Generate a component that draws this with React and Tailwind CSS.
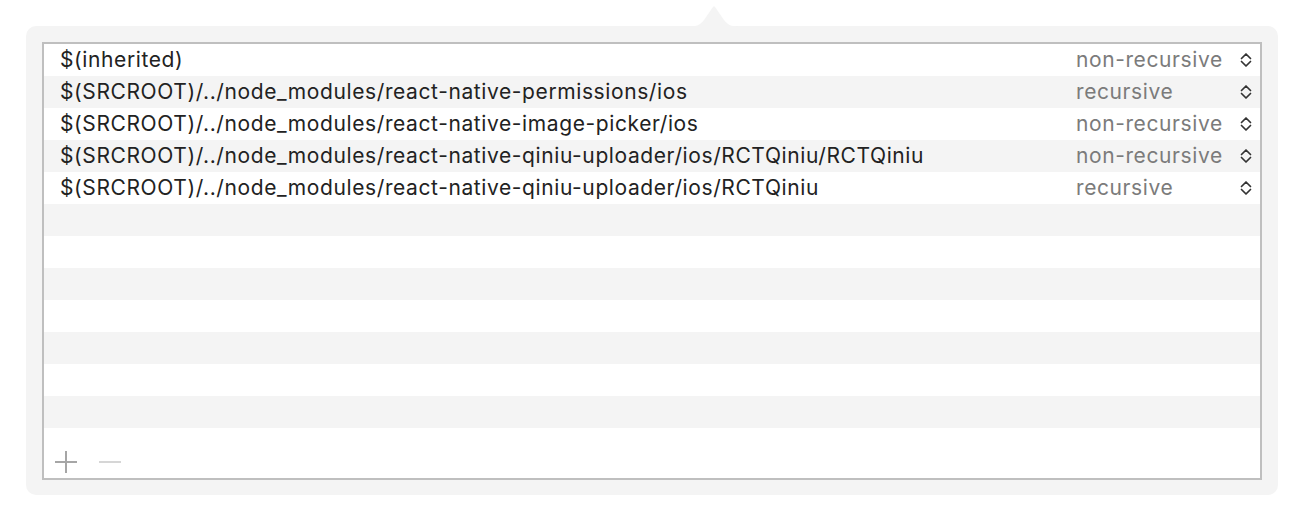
const rows = [
  { path: '$(inherited)', mode: 'non-recursive' },
  { path: '$(SRCROOT)/../node_modules/react-native-permissions/ios', mode: 'recursive' },
  { path: '$(SRCROOT)/../node_modules/react-native-image-picker/ios', mode: 'non-recursive' },
  { path: '$(SRCROOT)/../node_modules/react-native-qiniu-uploader/ios/RCTQiniu/RCTQiniu', mode: 'non-recursive' },
  { path: '$(SRCROOT)/../node_modules/react-native-qiniu-uploader/ios/RCTQiniu', mode: 'recursive' },
];

const FILLER = 7;

function UpDown() {
  return (
    <svg width="12" height="16" viewBox="0 0 12 16" fill="none" stroke="#333" strokeWidth="1.7" strokeLinecap="round" strokeLinejoin="round">
      <path d="M1.5 6.5 L6 2 L10.5 6.5" />
      <path d="M1.5 9.5 L6 14 L10.5 9.5" />
    </svg>
  );
}

export default function App() {
  const stripe = (i) => (i % 2 === 0 ? 'bg-white' : 'bg-[#f4f4f4]');

  return (
    <div className="relative h-[522px] w-[1304px] bg-white pt-[26px] pl-[26px] font-['Inter',sans-serif]">
      {/* popover arrow */}
      <svg className="absolute left-[686px] top-0" width="56" height="27" viewBox="0 0 56 27">
        <path d="M0 27 C10 27 14 25 18 20 L27 7 Q28 5.5 29 7 L38 20 C42 25 46 27 56 27 Z" fill="#f4f4f4" />
      </svg>

      <div className="h-[469px] w-[1252px] rounded-[10px] bg-[#f4f4f4] p-[16px] pb-[15px]">
        <div className="flex h-[438px] flex-col border-2 border-[#bfbfbf] bg-white">
          {rows.map((r, i) => (
            <div key={i} className={`flex h-[32px] items-center pl-[16px] pr-[8px] text-[21px] tracking-[0.6px] ${stripe(i)}`}>
              <span className="flex-1 truncate text-[#222]">{r.path}</span>
              <span className="w-[164px] text-[#7b7b7b]">{r.mode}</span>
              <UpDown />
            </div>
          ))}
          {Array.from({ length: FILLER }).map((_, j) => (
            <div key={'f' + j} className={`h-[32px] ${stripe(j + rows.length)}`} />
          ))}
          <div className="flex flex-1 items-center gap-[22px] pl-[11px] pt-[18px]">
            <svg width="22" height="22" viewBox="0 0 22 22" stroke="#a6a6a6" strokeWidth="2">
              <path d="M11 0 V22 M0 11 H22" />
            </svg>
            <svg width="22" height="22" viewBox="0 0 22 22" stroke="#d6d6d6" strokeWidth="2">
              <path d="M0 11 H22" />
            </svg>
          </div>
        </div>
      </div>
    </div>
  );
}
